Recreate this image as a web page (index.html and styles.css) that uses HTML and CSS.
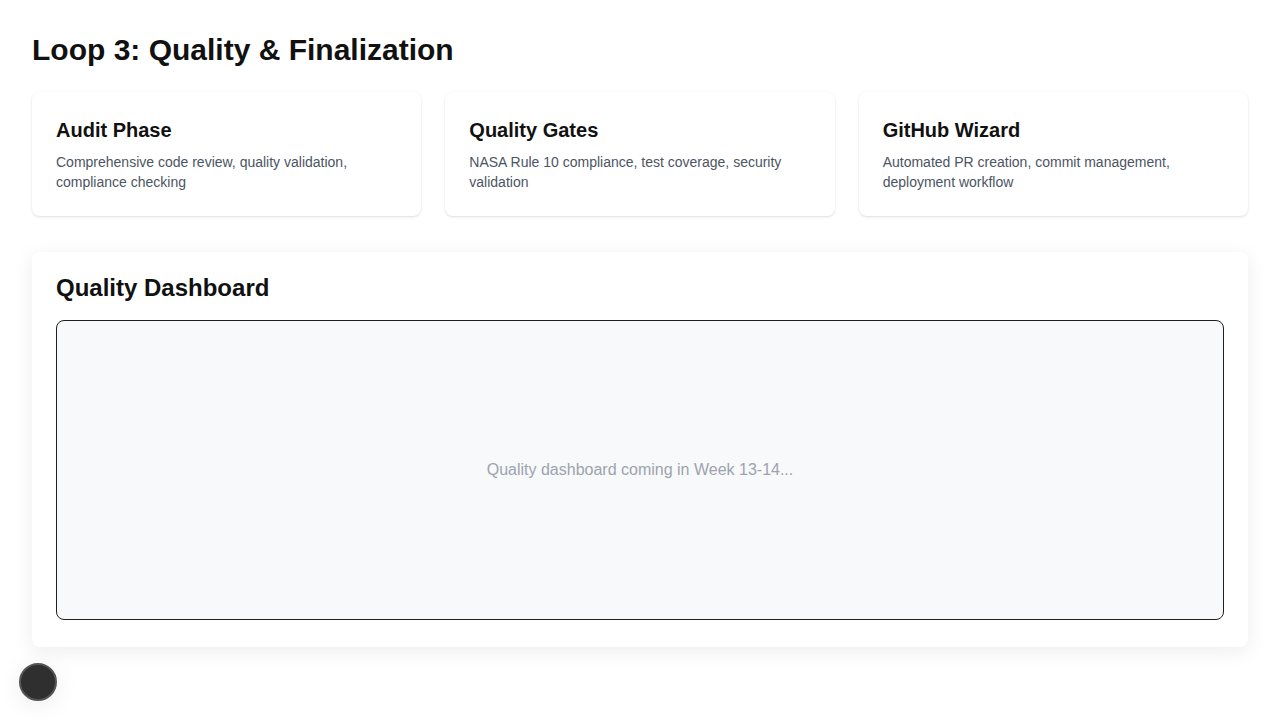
FILE: index.html
```html
<!DOCTYPE html>
<html lang="en">
<head>
<meta charset="utf-8">
<title>Loop 3: Quality &amp; Finalization</title>
<link rel="stylesheet" href="styles.css">
</head>
<body>
<main class="page">
  <h1 class="page-title">Loop 3: Quality &amp; Finalization</h1>
  <section class="cards">
    <article class="card">
      <h3 class="card-title">Audit Phase</h3>
      <p class="card-text">Comprehensive code review, quality validation, compliance checking</p>
    </article>
    <article class="card">
      <h3 class="card-title">Quality Gates</h3>
      <p class="card-text">NASA Rule 10 compliance, test coverage, security validation</p>
    </article>
    <article class="card">
      <h3 class="card-title">GitHub Wizard</h3>
      <p class="card-text">Automated PR creation, commit management, deployment workflow</p>
    </article>
  </section>
  <section class="panel">
    <h2 class="panel-title">Quality Dashboard</h2>
    <div class="placeholder">Quality dashboard coming in Week 13-14...</div>
  </section>
</main>
<button class="fab" aria-label="Open"></button>
</body>
</html>
```
FILE: styles.css
```css
* { box-sizing: border-box; }
html, body { margin: 0; padding: 0; background: #ffffff; }
body {
  font-family: "Liberation Sans", Arial, sans-serif;
  color: #111111;
}
.page { padding: 32px; }
.page-title {
  margin: 0 0 24px;
  font-size: 30px;
  line-height: 36px;
  font-weight: 700;
  color: #111111;
}
.cards {
  display: grid;
  grid-template-columns: repeat(3, 1fr);
  gap: 24px;
}
.card {
  background: #ffffff;
  border-radius: 8px;
  padding: 24px;
  box-shadow: 0 1px 3px rgba(0,0,0,0.10), 0 1px 2px rgba(0,0,0,0.04);
}
.card-title {
  margin: 0 0 8px;
  font-size: 20px;
  line-height: 28px;
  font-weight: 700;
  color: #111111;
}
.card-text {
  margin: 0;
  font-size: 14px;
  line-height: 20px;
  color: #4b5563;
}
.panel {
  margin-top: 36px;
  background: #ffffff;
  border-radius: 8px;
  padding: 24px 24px 27px;
  box-shadow: 0 4px 20px rgba(0,0,0,0.08);
}
.panel-title {
  margin: 0 0 20px;
  font-size: 24px;
  line-height: 24px;
  font-weight: 700;
  color: #111111;
}
.placeholder {
  height: 300px;
  border: 1px solid #1f1f1f;
  border-radius: 8px;
  background: #f8f9fa;
  display: flex;
  align-items: center;
  justify-content: center;
  font-size: 16px;
  color: #9ca3af;
}
.fab {
  position: fixed;
  left: 19px;
  bottom: 19px;
  width: 38px;
  height: 38px;
  border-radius: 50%;
  background: #2f2f2f;
  border: 2px solid #555555;
  padding: 0;
  box-shadow: 0 4px 24px rgba(0,0,0,0.08);
}
```
